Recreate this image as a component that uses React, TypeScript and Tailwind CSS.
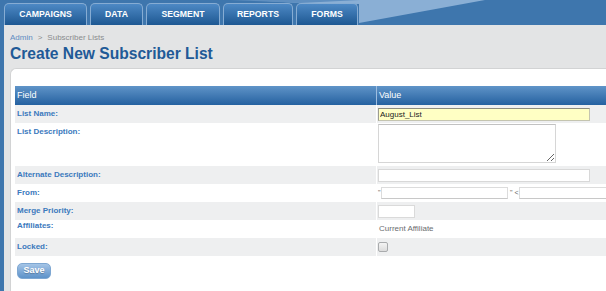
import React from 'react';

const tabs = [
  { label: 'CAMPAIGNS', w: 'w-[83px]' },
  { label: 'DATA', w: 'w-[53px]' },
  { label: 'SEGMENT', w: 'w-[74px]' },
  { label: 'REPORTS', w: 'w-[70px]' },
  { label: 'FORMS', w: 'w-[62px]' },
];

function Label({ children, top }: { children: React.ReactNode; top?: string }) {
  return (
    <div className={`w-[361px] shrink-0 pl-[2px] text-[8px] font-bold leading-[10px] text-[#3b79bd] ${top ?? 'self-center'}`}>
      {children}
    </div>
  );
}

export default function App() {
  return (
    <div className="h-[291px] w-[606px] overflow-hidden bg-[#e3e4e5] font-['Liberation_Sans',Arial,sans-serif]">
      <header className="relative h-[25px] overflow-hidden bg-[#3e76ad]">
        <svg className="absolute inset-0" width="606" height="25" viewBox="0 0 606 25">
          <polygon points="250,0 485,0 359,23 359,4 300,3" fill="#8aafd5" />
          <polygon points="230,0 360,0 300,3" fill="#5f8fc0" />
        </svg>
        <nav className="relative flex h-full gap-[3px] pl-[4px] pt-[3px]">
          {tabs.map((t) => (
            <div
              key={t.label}
              className={`${t.w} flex items-center justify-center rounded-t-[5px] border border-b-0 border-[#86acd3] bg-gradient-to-b from-[#4d89c5] to-[#1d5892] text-[8.7px] font-bold text-white`}
            >
              {t.label}
            </div>
          ))}
        </nav>
      </header>

      <div className="flex h-[266px]">
        <div className="w-[4px] shrink-0 bg-[#3e76ad]" />
        <div className="flex min-w-0 flex-1 flex-col pl-[6px]">
          <div className="pt-[8px] text-[8px] leading-[10px] text-[#8a8c8e]">
            <span className="text-[#5d8cc2]">Admin</span>
            <span className="mx-[5px]">&gt;</span>
            <span>Subscriber Lists</span>
          </div>
          <h1 className="mt-[2px] text-[15.6px] font-bold leading-[18px] text-[#1f5a97]">Create New Subscriber List</h1>

          <div className="mt-[5px] flex-1 rounded-tl-[6px] border-l border-t border-[#d2d3d4] bg-white pl-[4px] pt-[17px]">
            <div className="w-[650px]">
              <div className="flex h-[19px] bg-gradient-to-b from-[#5f94c8] to-[#2461a0] text-[9px] leading-[19px] text-white">
                <div className="w-[361px] shrink-0 pl-[2px]">Field</div>
                <div className="flex-1 border-l border-[#9dbde0] pl-[2px]">Value</div>
              </div>

              <div className="flex h-[18px] bg-[#eeeff0]">
                <Label>List Name:</Label>
                <div className="flex flex-1 items-center border-l border-white pl-[1px]">
                  <input
                    defaultValue="August_List"
                    className="h-[13px] w-[212px] border border-[#c4c4b0] border-l-[#9c9c90] border-t-[#8c8c80] bg-[#ffffc4] px-[1px] text-[8px] leading-[11px] text-[#222] outline-none"
                  />
                </div>
              </div>

              <div className="flex h-[43px] bg-white">
                <Label top="self-start pt-[4px]">List Description:</Label>
                <div className="flex-1 border-l border-white pl-[1px] pt-[1px]">
                  <textarea className="block h-[39px] w-[178px] resize border border-[#d6d6d6] border-t-[#c2c2c2] bg-white outline-none" />
                </div>
              </div>

              <div className="flex h-[18px] bg-[#eeeff0]">
                <Label>Alternate Description:</Label>
                <div className="flex flex-1 items-center border-l border-white pl-[1px]">
                  <input className="h-[13px] w-[212px] border border-[#d8d8d8] bg-white outline-none" />
                </div>
              </div>

              <div className="flex h-[18px] bg-white">
                <Label>From:</Label>
                <div className="flex flex-1 items-center border-l border-white pl-[1px] text-[7px] text-[#666]">
                  <span className="w-[3px]">"</span>
                  <input className="h-[12px] w-[127px] border border-[#dcdcdc] border-b-[#c8c8c8] bg-white outline-none" />
                  <span className="ml-[2px] w-[9px]">" &lt;</span>
                  <input className="h-[12px] w-[130px] border border-[#dcdcdc] border-b-[#c8c8c8] bg-white outline-none" />
                </div>
              </div>

              <div className="flex h-[18px] bg-[#eeeff0]">
                <Label>Merge Priority:</Label>
                <div className="flex flex-1 items-center border-l border-white pl-[1px]">
                  <input className="h-[13px] w-[37px] border border-[#dadada] bg-white outline-none" />
                </div>
              </div>

              <div className="flex h-[18px] bg-white">
                <Label top="self-start pt-[1px]">Affiliates:</Label>
                <div className="flex flex-1 items-center border-l border-white pl-[2px] text-[8px] text-[#6b6d70]">
                  Current Affiliate
                </div>
              </div>

              <div className="flex h-[18px] bg-[#eeeff0]">
                <Label>Locked:</Label>
                <div className="flex flex-1 items-center border-l border-white pl-[1px]">
                  <input
                    type="checkbox"
                    className="h-[10px] w-[10px] appearance-none rounded-[2px] border border-[#a9abad] bg-gradient-to-b from-[#f4f4f4] to-[#dcdcdc]"
                  />
                </div>
              </div>
            </div>

            <button className="ml-[2px] mt-[4px] h-[16px] w-[34px] rounded-[5px] border border-[#7ea7d2] bg-gradient-to-b from-[#a4c4e6] to-[#5d92c9] text-[9px] font-bold text-white [text-shadow:0_1px_1px_rgba(0,0,0,0.25)]">
              Save
            </button>
          </div>
        </div>
      </div>
    </div>
  );
}
